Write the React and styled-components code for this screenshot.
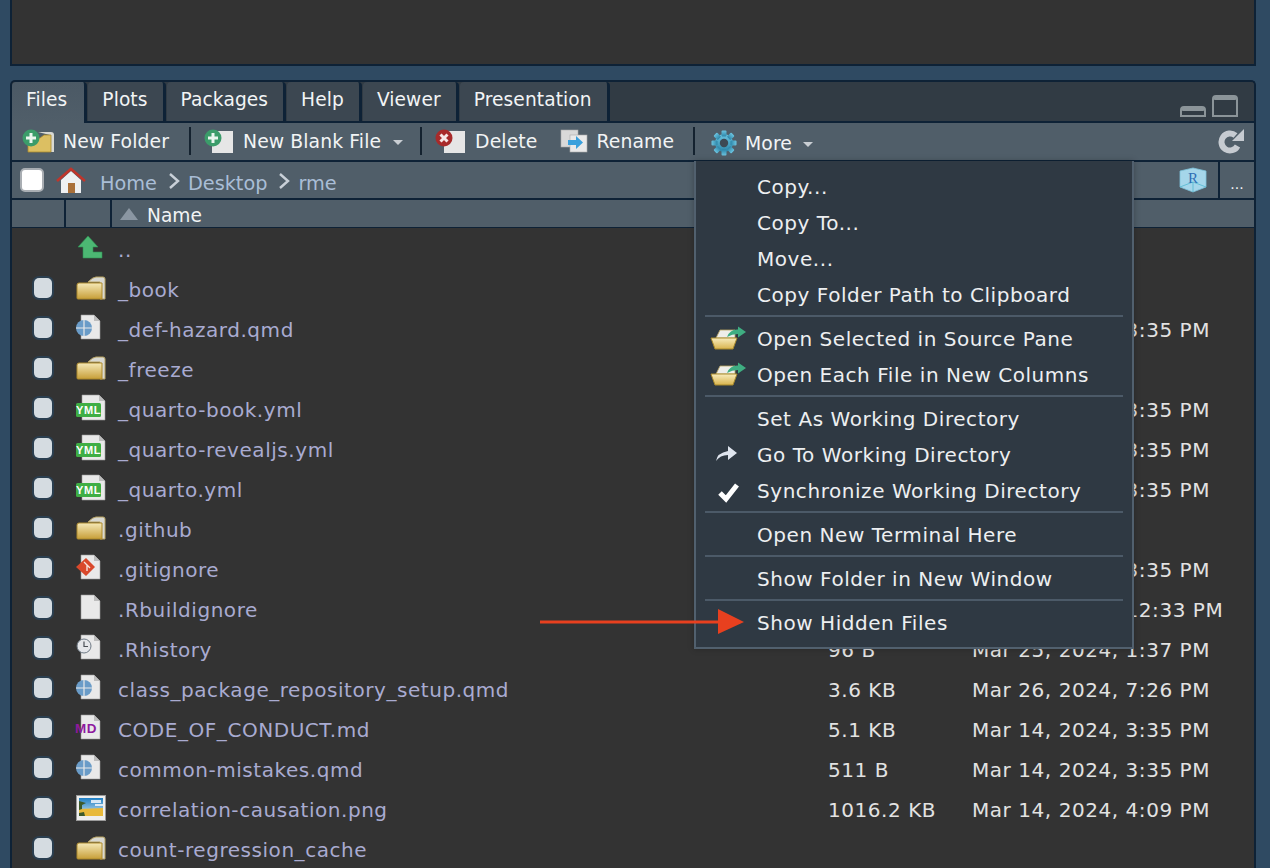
import React from 'react';
import styled, { createGlobalStyle } from 'styled-components';

const GlobalStyle = createGlobalStyle`
  html, body {
    margin: 0;
    padding: 0;
    background: #2f4a62;
    font-family: "DejaVu Sans", "Liberation Sans", sans-serif;
  }
`;

const Page = styled.div`
  position: relative;
  width: 1270px;
  height: 868px;
  overflow: hidden;
  background: #2f4a62;
  padding: 0 14px 0 10px;
  box-sizing: border-box;
  display: flex;
  flex-direction: column;
  gap: 14px;
  font-size: 20px;
`;

const TopPane = styled.div`
  height: 66px;
  flex: none;
  box-sizing: border-box;
  background: #333333;
  border: 2px solid #0e2236;
  border-top: none;
`;

const FilesPane = styled.div`
  flex: 1;
  display: flex;
  flex-direction: column;
  border: 2px solid #0e2236;
  border-bottom: none;
  border-radius: 5px 5px 0 0;
  background: #333333;
  overflow: hidden;
`;

const TabBar = styled.div`
  height: 39px;
  flex: none;
  display: flex;
  align-items: flex-end;
  gap: 1px;
  background: #313b44;
  border-bottom: 2px solid #0e2236;
  font-size: 18.6px;
  letter-spacing: 0.1px;
`;

const Tab = styled.div`
  height: ${(p) => (p.$active ? '41px' : '39px')};
  margin-bottom: ${(p) => (p.$active ? '-2px' : '0')};
  box-sizing: border-box;
  padding: 7px ${(p) => (p.$active ? 17 : 15)}px 0 14px;
  color: #f2f4f5;
  background: ${(p) => (p.$active ? 'linear-gradient(#4b5965, #505e69)' : '#3c4751')};
  border-right: 3px solid #0e2236;
  border-radius: 4px 4px 0 0;
`;

const PaneControls = styled.div`
  margin-left: auto;
  margin-right: 16px;
  margin-bottom: 4px;
  display: flex;
  align-items: flex-end;
  gap: 6px;
`;

const Toolbar = styled.div`
  height: 36px;
  flex: none;
  display: flex;
  align-items: center;
  padding: 0 0 1px 10px;
  background: #505e69;
  border-bottom: 2px solid #0e2236;
  font-size: 18.8px;
  letter-spacing: 0.1px;
`;

const ToolButton = styled.div`
  display: flex;
  align-items: center;
  gap: ${(p) => p.$gap || 8}px;
  color: #f2f4f5;
  margin-right: ${(p) => p.$after || 0}px;
  padding-top: ${(p) => p.$drop || 0}px;
`;

const ToolSep = styled.div`
  width: 2px;
  height: 28px;
  background: #14222f;
  margin-right: ${(p) => p.$after}px;
`;

const Caret = styled.span`
  width: 0;
  height: 0;
  margin-left: 3px;
  margin-top: 2px;
  border-left: 5px solid transparent;
  border-right: 5px solid transparent;
  border-top: 5px solid #c9ced3;
`;

const Refresh = styled.div`
  margin-left: auto;
  margin-right: 10px;
  display: flex;
`;

const PathBar = styled.div`
  height: 36px;
  flex: none;
  display: flex;
  align-items: center;
  padding-left: 8px;
  background: #505e69;
  border-bottom: 2px solid #0e2236;
  color: #a9bdd6;
  font-size: 19.3px;
`;

const PathCheck = styled.div`
  width: 20px;
  height: 20px;
  border-radius: 5px;
  background: #ffffff;
  border: 2px solid #a9aeb3;
  margin-right: 12px;
`;

const Crumb = styled.span`
  margin-left: ${(p) => p.$gap || 0}px;
  padding-top: 6px;
`;

const CrumbArrow = styled.svg`
  width: 12px;
  height: 16px;
  margin-left: 11px;
  margin-top: 2px;
`;

const PathRight = styled.div`
  margin-left: auto;
  height: 100%;
  display: flex;
  align-items: center;
`;

const Ellipsis = styled.div`
  width: 36px;
  height: 100%;
  margin-left: 11px;
  border-left: 2px solid #0e2236;
  color: #f2f4f5;
  font-size: 14px;
  display: flex;
  align-items: center;
  justify-content: center;
  padding-top: 8px;
  box-sizing: border-box;
`;

const HeaderRow = styled.div`
  height: 27px;
  flex: none;
  display: flex;
  background: #505e69;
  border-bottom: 1px solid #0e2236;
  color: #f2f4f5;
  font-size: 18.6px;
`;

const HeaderCell = styled.div`
  width: ${(p) => p.$w}px;
  flex: none;
  box-sizing: border-box;
  border-right: 2px solid #0e2236;
`;

const NameHeader = styled.div`
  display: flex;
  align-items: center;
  gap: 9px;
  padding-left: 8px;
`;

const NameLabel = styled.span`
  padding-top: 4px;
`;

const SortUp = styled.span`
  width: 0;
  height: 0;
  border-left: 9px solid transparent;
  border-right: 9px solid transparent;
  border-bottom: 12px solid #8a96a2;
`;

const FileList = styled.div`
  flex: 1;
  background: #333333;
  letter-spacing: 0.55px;
`;

const Row = styled.div`
  height: 40px;
  display: grid;
  grid-template-columns: 64px 42px 710px 144px 1fr;
  align-items: center;
  color: #e2e2e2;
`;

const RowCheck = styled.div`
  width: 18px;
  height: 20px;
  margin-left: 22px;
  border-radius: 5px;
  background: #d5dce1;
  box-shadow: 0 0 0 2px #2b3f50;
`;

const IconCell = styled.div`
  display: flex;
  align-items: center;

  svg {
    overflow: visible;
  }
`;

const FileName = styled.div`
  color: #a9abd1;
  padding-top: 4px;
  white-space: nowrap;
`;

const Meta = styled.div`
  padding-top: 4px;
  white-space: nowrap;
`;

const Menu = styled.div`
  position: absolute;
  left: 694px;
  top: 161px;
  width: 440px;
  height: 488px;
  box-sizing: border-box;
  padding: 8px 9px 0 9px;
  background: #2f3943;
  border: 2px solid #51606e;
  border-top: none;
  box-shadow: 0 0 6px rgba(0, 0, 0, 0.25);
  color: #edeff1;
  letter-spacing: 0.55px;
`;

const MenuItem = styled.div`
  height: 36px;
  display: flex;
  align-items: center;
  padding-left: 52px;
  position: relative;
  white-space: nowrap;
`;

const MenuIcon = styled.span`
  position: absolute;
  left: 5px;
  top: 50%;
  transform: translateY(-50%);
  display: flex;
`;

const MenuSep = styled.div`
  height: 2px;
  margin: 2px 0 4px;
  background: #4c5a68;
`;

const Callout = styled.svg`
  position: absolute;
  left: 540px;
  top: 606px;
`;

const DocPage = () => (
  <>
    <path d="M5 0H18L24 6V24H5Z" fill="#e9e9e9" stroke="#9a9a9a" strokeWidth=".6" />
    <path d="M18 0L24 6H18Z" fill="#bdbdbd" />
  </>
);

const FolderIcon = () => (
  <svg width="30" height="26" viewBox="0 0 30 26">
    <defs>
      <linearGradient id="fold" x1="0" y1="0" x2="0" y2="1">
        <stop offset="0" stopColor="#f5e9b8" />
        <stop offset="1" stopColor="#c79f38" />
      </linearGradient>
    </defs>
    <path d="M12 7Q17 2 20 2H27Q29 2 29 4V24H24V7Z" fill="#d9d9d3" stroke="#b8a361" strokeWidth="1" />
    <path d="M1 10Q1 8 3 8H26V24H2Q1 24 1 23Z" fill="url(#fold)" stroke="#ad8a2c" strokeWidth="1" />
  </svg>
);

const QmdIcon = () => (
  <svg width="30" height="26" viewBox="0 0 30 26">
    <DocPage />
    <circle cx="8" cy="13" r="8" fill="#6a9cc8" />
    <path d="M8 5V21M0 13H16" stroke="#e9e9e9" strokeWidth="1.2" />
  </svg>
);

const YmlIcon = () => (
  <svg width="30" height="26" viewBox="0 0 30 26">
    <path d="M6 0H23L29 6V25H6Z" fill="#e9e9e9" stroke="#9a9a9a" strokeWidth=".6" />
    <path d="M23 0L29 6H23Z" fill="#bdbdbd" />
    <rect x="0" y="8" width="25" height="14" rx="1.5" fill="#3fae45" />
    <text x="12.5" y="19" textAnchor="middle" fontSize="11" fontWeight="700" fill="#ffffff" fontFamily="Liberation Sans, sans-serif">YML</text>
  </svg>
);

const GitIcon = () => (
  <svg width="30" height="26" viewBox="0 0 30 26">
    <DocPage />
    <path d="M10 3L19 12L10 21L0 12Z" fill="#d9492c" />
    <path d="M8 7L11 10V16M11 10L14 13" stroke="#f7e3de" strokeWidth="1.4" fill="none" />
  </svg>
);

const BlankIcon = () => (
  <svg width="30" height="26" viewBox="0 0 30 26">
    <DocPage />
  </svg>
);

const ClockIcon = () => (
  <svg width="30" height="26" viewBox="0 0 30 26">
    <DocPage />
    <circle cx="8" cy="11" r="7" fill="#e4e6ea" stroke="#6f7a85" strokeWidth="1" />
    <path d="M8 6.5V11.5H12" stroke="#4a4f55" strokeWidth="1.2" fill="none" />
  </svg>
);

const MdIcon = () => (
  <svg width="30" height="26" viewBox="0 0 30 26">
    <DocPage />
    <text x="-1" y="18" fontSize="13.5" fontWeight="700" textLength="22" lengthAdjust="spacingAndGlyphs" fill="#8e1a9e" fontFamily="Liberation Sans, sans-serif">MD</text>
  </svg>
);

const PictureIcon = () => (
  <svg width="30" height="26" viewBox="0 0 30 26">
    <defs>
      <linearGradient id="sky" x1="0" y1="0" x2="0" y2="1">
        <stop offset="0" stopColor="#1f7fc4" />
        <stop offset="1" stopColor="#cfe6ee" />
      </linearGradient>
    </defs>
    <rect x=".5" y=".5" width="29" height="25" fill="#eeeeee" stroke="#9a9a9a" />
    <rect x="3" y="3" width="24" height="18" fill="url(#sky)" />
    <path d="M3 14L27 13V21H3Z" fill="#e8b93a" />
    <path d="M15 5H25V8H15ZM19 9H27V11H19Z" fill="#f1f6fa" opacity=".85" />
    <path d="M3 6L10 8L6 10V14L3 15ZM3 18L8 17L9 21H3Z" fill="#3d5a2a" />
  </svg>
);

const UpIcon = () => (
  <svg width="30" height="26" viewBox="0 0 30 26">
    <path d="M12 1L22 12H17V17H26V23H7V12H2Z" fill="#4cb873" stroke="#2f9054" strokeWidth=".6" />
  </svg>
);

const fileIcons = {
  up: UpIcon,
  folder: FolderIcon,
  qmd: QmdIcon,
  yml: YmlIcon,
  git: GitIcon,
  blank: BlankIcon,
  clock: ClockIcon,
  md: MdIcon,
  png: PictureIcon,
};

const files = [
  { name: '..', icon: 'up', noCheck: true },
  { name: '_book', icon: 'folder' },
  { name: '_def-hazard.qmd', icon: 'qmd', date: 'Mar 14, 2024, 3:35 PM' },
  { name: '_freeze', icon: 'folder' },
  { name: '_quarto-book.yml', icon: 'yml', date: 'Mar 14, 2024, 3:35 PM' },
  { name: '_quarto-revealjs.yml', icon: 'yml', date: 'Mar 14, 2024, 3:35 PM' },
  { name: '_quarto.yml', icon: 'yml', date: 'Mar 14, 2024, 3:35 PM' },
  { name: '.github', icon: 'folder' },
  { name: '.gitignore', icon: 'git', date: 'Mar 14, 2024, 3:35 PM' },
  { name: '.Rbuildignore', icon: 'blank', date: 'Mar 14, 2024, 12:33 PM' },
  { name: '.Rhistory', icon: 'clock', size: '96 B', date: 'Mar 25, 2024, 1:37 PM' },
  { name: 'class_package_repository_setup.qmd', icon: 'qmd', size: '3.6 KB', date: 'Mar 26, 2024, 7:26 PM' },
  { name: 'CODE_OF_CONDUCT.md', icon: 'md', size: '5.1 KB', date: 'Mar 14, 2024, 3:35 PM' },
  { name: 'common-mistakes.qmd', icon: 'qmd', size: '511 B', date: 'Mar 14, 2024, 3:35 PM' },
  { name: 'correlation-causation.png', icon: 'png', size: '1016.2 KB', date: 'Mar 14, 2024, 4:09 PM' },
  { name: 'count-regression_cache', icon: 'folder' },
];

const OpenFolderIcon = () => (
  <svg width="38" height="26" viewBox="0 0 38 26">
    <defs>
      <linearGradient id="openfold" x1="0" y1="0" x2="0" y2="1">
        <stop offset="0" stopColor="#f7ecbd" />
        <stop offset="1" stopColor="#d9b44e" />
      </linearGradient>
    </defs>
    <path d="M6 12L10 4H25V12Z" fill="#eeeeea" stroke="#b8a361" strokeWidth=".8" />
    <path d="M1 12H27L23 23H5Z" fill="url(#openfold)" stroke="#a98a2c" strokeWidth="1" />
    <path d="M17 11Q20 3 28 3.5V0.5L36 6L28 11.5V8Q22 8 17 11Z" fill="#3fae82" />
  </svg>
);

const menuGroups = [
  [{ label: 'Copy...' }, { label: 'Copy To...' }, { label: 'Move...' }, { label: 'Copy Folder Path to Clipboard' }],
  [
    { label: 'Open Selected in Source Pane', icon: <OpenFolderIcon /> },
    { label: 'Open Each File in New Columns', icon: <OpenFolderIcon /> },
  ],
  [
    { label: 'Set As Working Directory' },
    {
      label: 'Go To Working Directory',
      icon: (
        <svg width="34" height="20" viewBox="0 0 34 20">
          <path d="M6 16Q7 8 18 6V1L27 8L18 15V10Q10 10 6 16Z" fill="#dfe5ee" />
        </svg>
      ),
    },
    {
      label: 'Synchronize Working Directory',
      icon: (
        <svg width="34" height="24" viewBox="0 0 34 24">
          <path d="M10 14L16 20L27 6" stroke="#ffffff" strokeWidth="5" fill="none" />
        </svg>
      ),
    },
  ],
  [{ label: 'Open New Terminal Here' }],
  [{ label: 'Show Folder in New Window' }],
  [{ label: 'Show Hidden Files' }],
];

const PlusBadge = () => (
  <>
    <circle cx="9" cy="9" r="8.5" fill="#3b9c6a" />
    <path d="M9 4V14M4 9H14" stroke="#e9f5ee" strokeWidth="3" />
  </>
);

const App = () => (
  <>
    <GlobalStyle />
    <Page>
      <TopPane />
      <FilesPane>
        <TabBar>
          <Tab $active>Files</Tab>
          <Tab>Plots</Tab>
          <Tab>Packages</Tab>
          <Tab>Help</Tab>
          <Tab>Viewer</Tab>
          <Tab>Presentation</Tab>
          <PaneControls>
            <svg width="26" height="11" viewBox="0 0 26 11">
              <path d="M1 10V4Q1 1 4 1H22Q25 1 25 4V10Z" fill="none" stroke="#8b9499" strokeWidth="2" />
              <rect x="1" y="1" width="24" height="4" rx="2" fill="#8b9499" />
            </svg>
            <svg width="26" height="22" viewBox="0 0 26 22">
              <path d="M1 21V4Q1 1 4 1H22Q25 1 25 4V21Z" fill="none" stroke="#8b9499" strokeWidth="2" />
              <rect x="1" y="1" width="24" height="4" rx="2" fill="#8b9499" />
            </svg>
          </PaneControls>
        </TabBar>

        <Toolbar>
          <ToolButton $after={20}>
            <svg width="33" height="24" viewBox="0 0 33 24">
              <path d="M16 3H29Q32 3 32 6V23H28V6Z" fill="#d8d8d2" />
              <path d="M6 9H18L22 6H29V23H6Z" fill="#dcbf62" stroke="#a98a2c" strokeWidth=".8" />
              <PlusBadge />
            </svg>
            New Folder
          </ToolButton>
          <ToolSep $after={13} />
          <ToolButton $after={17} $gap={9}>
            <svg width="30" height="24" viewBox="0 0 30 24">
              <rect x="8" y="2" width="21" height="22" fill="#e6e6e6" />
              <PlusBadge />
            </svg>
            New Blank File
            <Caret />
          </ToolButton>
          <ToolSep $after={13} />
          <ToolButton $after={23} $gap={9}>
            <svg width="31" height="24" viewBox="0 0 31 24">
              <rect x="9" y="2" width="21" height="22" fill="#e6e6e6" />
              <circle cx="9" cy="9" r="8.5" fill="#a82a2a" />
              <path d="M5.5 5.5L12.5 12.5M12.5 5.5L5.5 12.5" stroke="#f6e7e7" strokeWidth="3" />
            </svg>
            Delete
          </ToolButton>
          <ToolButton $after={19}>
            <svg width="28" height="24" viewBox="0 0 28 24">
              <rect x="1" y="1" width="17" height="17" fill="#d9d9d9" stroke="#aaaaaa" strokeWidth=".6" />
              <rect x="10" y="6" width="17" height="17" fill="#e9e9e9" stroke="#aaaaaa" strokeWidth=".6" />
              <path d="M8 11H16V7L23 13.5L16 20V16H8Z" fill="#3aa0dc" />
            </svg>
            Rename
          </ToolButton>
          <ToolSep $after={16} />
          <ToolButton $drop={4}>
            <svg width="26" height="26" viewBox="0 0 26 26">
              <defs>
                <linearGradient id="gear" x1="0" y1="0" x2="0" y2="1">
                  <stop offset="0" stopColor="#6cc4e0" />
                  <stop offset="1" stopColor="#2c85a8" />
                </linearGradient>
              </defs>
              <g fill="url(#gear)">
                <circle cx="13" cy="13" r="9" />
                {[0, 45, 90, 135, 180, 225, 270, 315].map((a) => (
                  <rect key={a} x="10.5" y="0.5" width="5" height="6" rx="1" transform={`rotate(${a} 13 13)`} />
                ))}
              </g>
              <circle cx="13" cy="13" r="4.2" fill="#3d4954" />
            </svg>
            More
            <Caret />
          </ToolButton>
          <Refresh>
            <svg width="26" height="26" viewBox="0 0 26 26">
              <path d="M19.5 18A8.5 8.5 0 1 1 17.5 7.5" fill="none" stroke="#c6cbd1" strokeWidth="6" />
              <path d="M26 1V13H14Z" fill="#c6cbd1" />
            </svg>
          </Refresh>
        </Toolbar>

        <PathBar>
          <PathCheck />
          <svg width="30" height="27" viewBox="0 0 30 27">
            <path d="M5 13L15 4L25 13V26H5Z" fill="#eef0f2" />
            <rect x="12" y="16" width="7" height="10" fill="#a9703a" />
            <path d="M1 14L15 2L29 14" fill="none" stroke="#c0352b" strokeWidth="2.6" />
          </svg>
          <Crumb $gap={14}>Home</Crumb>
          <CrumbArrow viewBox="0 0 12 16">
            <path d="M2 1L10 8L2 15" fill="none" stroke="#c9d0d8" strokeWidth="2.4" />
          </CrumbArrow>
          <Crumb $gap={8}>Desktop</Crumb>
          <CrumbArrow viewBox="0 0 12 16">
            <path d="M2 1L10 8L2 15" fill="none" stroke="#c9d0d8" strokeWidth="2.4" />
          </CrumbArrow>
          <Crumb $gap={8}>rme</Crumb>
          <PathRight>
            <svg width="28" height="26" viewBox="0 0 28 26">
              <path d="M14 1L27 4V20L14 25L1 20V4Z" fill="#a5d6ea" stroke="#7fc3da" strokeWidth=".8" />
              <path d="M1 20L14 15L27 20M14 15V25" fill="none" stroke="#52b8cf" strokeWidth=".8" />
              <text x="14" y="16" textAnchor="middle" fontSize="15" fill="#2f6fb5" fontFamily="Liberation Serif, serif">R</text>
            </svg>
            <Ellipsis>...</Ellipsis>
          </PathRight>
        </PathBar>

        <HeaderRow>
          <HeaderCell $w={54} />
          <HeaderCell $w={46} />
          <NameHeader>
            <SortUp />
            <NameLabel>Name</NameLabel>
          </NameHeader>
        </HeaderRow>

        <FileList>
          {files.map((file) => {
            const Icon = fileIcons[file.icon];
            return (
              <Row key={file.name}>
                <div>{!file.noCheck && <RowCheck />}</div>
                <IconCell>
                  <Icon />
                </IconCell>
                <FileName>{file.name}</FileName>
                <Meta>{file.size}</Meta>
                <Meta>{file.date}</Meta>
              </Row>
            );
          })}
        </FileList>
      </FilesPane>

      <Menu>
        {menuGroups.map((group, i) => (
          <React.Fragment key={group[0].label}>
            {i > 0 && <MenuSep />}
            {group.map((item) => (
              <MenuItem key={item.label}>
                {item.icon && <MenuIcon>{item.icon}</MenuIcon>}
                {item.label}
              </MenuItem>
            ))}
          </React.Fragment>
        ))}
      </Menu>

      <Callout width="206" height="32" viewBox="0 0 206 32">
        <path d="M0 14.5H178V3L204 16L178 28V17.5H0Z" fill="#e8401f" />
      </Callout>
    </Page>
  </>
);

export default App;
